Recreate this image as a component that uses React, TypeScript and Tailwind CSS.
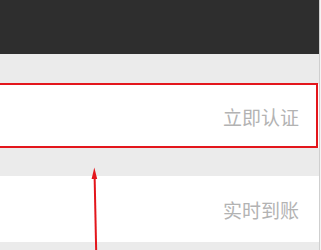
import React from "react";

export default function App() {
  const font = { fontFamily: '"Noto Sans CJK SC", "Noto Sans", sans-serif' };
  return (
    <div className="relative w-[321px] h-[250px] overflow-hidden bg-[#f4f4f4]" style={font}>
      <div className="w-[320px] h-full flex flex-col bg-[#ebebeb] border-r border-[#cfcfcf]">
        <div className="h-[54px] bg-[#2e2e2e] shrink-0" />
        <div className="h-[30px] shrink-0" />
        <div className="h-[64px] bg-white flex items-center justify-end pr-[20px] shrink-0">
          <span className="text-[19px] leading-none text-[#b3b3b3]">立即认证</span>
        </div>
        <div className="h-[28px] shrink-0" />
        <div className="h-[66px] bg-white flex items-center justify-end pr-[20px] shrink-0">
          <span className="text-[19px] leading-none text-[#b3b3b3]">实时到账</span>
        </div>
      </div>
      <div className="absolute left-[-4px] top-[83px] w-[322px] h-[65px] border-2 border-[#e3161c]" />
      <svg className="absolute left-0 top-0" width="321" height="250" viewBox="0 0 321 250">
        <line x1="96.2" y1="252" x2="94.6" y2="176" stroke="#e3161c" strokeWidth="2" />
        <polygon points="94.3,167.5 91.6,179 97.2,179" fill="#e3161c" />
      </svg>
    </div>
  );
}
